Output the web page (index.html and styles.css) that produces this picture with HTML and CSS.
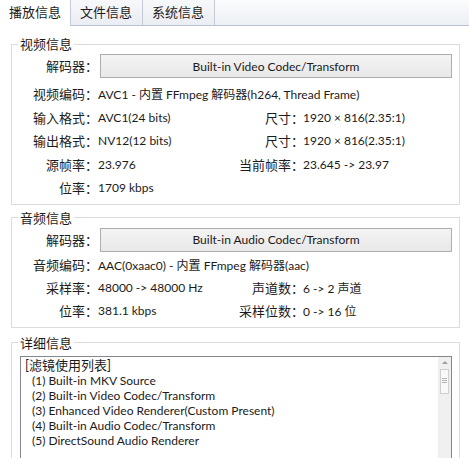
FILE: index.html
```html
<!DOCTYPE html>
<html lang="zh-CN">
<head>
    <meta charset="UTF-8">
    <title>播放信息</title>
    <link rel="stylesheet" href="styles.css">
</head>
<body>
    <div class="tabs">
        <div class="tab active">播放信息</div>
        <div class="tab">文件信息</div>
        <div class="tab">系统信息</div>
    </div>

    <div class="page">
        <fieldset class="group">
            <legend>视频信息</legend>
            <div class="rows">
                <div class="label">解码器：</div>
                <button class="codec span">Built-in Video Codec/Transform</button>

                <div class="label">视频编码：</div>
                <div class="value span">AVC1 - 内置 FFmpeg 解码器(h264, Thread Frame)</div>

                <div class="label">输入格式：</div>
                <div class="value">AVC1(24 bits)</div>
                <div class="label">尺寸：</div>
                <div class="value right">1920 × 816(2.35:1)</div>

                <div class="label">输出格式：</div>
                <div class="value">NV12(12 bits)</div>
                <div class="label">尺寸：</div>
                <div class="value right">1920 × 816(2.35:1)</div>

                <div class="label">源帧率：</div>
                <div class="value">23.976</div>
                <div class="label">当前帧率：</div>
                <div class="value right">23.645 -&gt; 23.97</div>

                <div class="label">位率：</div>
                <div class="value span">1709 kbps</div>
            </div>
        </fieldset>

        <fieldset class="group audio">
            <legend>音频信息</legend>
            <div class="rows">
                <div class="label">解码器：</div>
                <button class="codec span">Built-in Audio Codec/Transform</button>

                <div class="label">音频编码：</div>
                <div class="value span">AAC(0xaac0) - 内置 FFmpeg 解码器(aac)</div>

                <div class="label">采样率：</div>
                <div class="value">48000 -&gt; 48000 Hz</div>
                <div class="label">声道数：</div>
                <div class="value right">6 -&gt; 2 声道</div>

                <div class="label">位率：</div>
                <div class="value">381.1 kbps</div>
                <div class="label">采样位数：</div>
                <div class="value right">0 -&gt; 16 位</div>
            </div>
        </fieldset>

        <fieldset class="group details">
            <legend>详细信息</legend>
            <div class="textbox">
                <div class="lines">
                    <div class="title">[滤镜使用列表]</div>
                    <div class="item">(1) Built-in MKV Source</div>
                    <div class="item">(2) Built-in Video Codec/Transform</div>
                    <div class="item">(3) Enhanced Video Renderer(Custom Present)</div>
                    <div class="item">(4) Built-in Audio Codec/Transform</div>
                    <div class="item">(5) DirectSound Audio Renderer</div>
                </div>
                <div class="scrollbar">
                    <div class="arrow"></div>
                    <div class="thumb"><span></span><span></span><span></span></div>
                </div>
            </div>
        </fieldset>
    </div>
</body>
</html>
```

FILE: styles.css
```css
:root {
    --text: #1b1b1b;
    --group-border: #dcdcdc;
    --tab-border: #c3cad6;
}

html, body {
    height: 100%;
}

body {
    margin: 0;
    overflow: hidden;
    background: #ffffff;
    color: var(--text);
    font-family: Lato, "Noto Sans CJK SC", sans-serif;
    font-size: 12px;
}

/* tab strip */
.tabs {
    display: flex;
    height: 25px;
    border-bottom: 1px solid #b9c3d1;
    background: linear-gradient(#fbfcfd, #eceff4);
    font-size: 13px;
}

.tab {
    width: 71px;
    height: 25px;
    line-height: 25px;
    padding-left: 9px;
    box-sizing: border-box;
    border-right: 1px solid var(--tab-border);
    background: linear-gradient(#f7f8fa, #eaedf2);
}

.tab.active {
    height: 26px;
    margin-bottom: -1px;
    background: #ffffff;
}

.tab + .tab {
    width: 72px;
}

/* group boxes */
.page {
    padding: 0 9px 0 11px;
}

.group {
    margin: 10px 0 0;
    padding: 2px 0 4px;
    border: 1px solid var(--group-border);
    min-width: 0;
}

.group.audio {
    margin-top: 5px;
}

.group.details {
    margin-top: 7px;
    padding-top: 5px;
}

.group legend {
    margin-left: 6px;
    padding: 0 2px;
    line-height: 16px;
    font-size: 13px;
}

.rows {
    display: grid;
    grid-template-columns: 86px 138px 68px 1fr;
    grid-template-rows: 28px;
    grid-auto-rows: 23.5px;
    align-items: center;
}

.audio .rows {
    grid-template-rows: 26px 22px;
}

.label {
    text-align: right;
    white-space: nowrap;
    font-size: 13px;
}

.rows > .label:first-child {
    align-self: start;
    line-height: 24px;
}

.value {
    white-space: nowrap;
}

.value.right {
    margin-left: -1px;
}

.span {
    grid-column: 2 / -1;
}

.codec {
    align-self: start;
    height: 24px;
    margin: 0 7px 0 2px;
    padding: 0;
    border: 1px solid #adadad;
    border-radius: 0;
    background: linear-gradient(#f3f3f3, #e8e8e8);
    color: var(--text);
    font: inherit;
}

/* details text box */
.textbox {
    display: flex;
    height: 110px;
    margin: 0 7px 0 8px;
    border: 1px solid #828790;
}

.lines {
    flex: 1;
    padding: 1px 4px 0;
    line-height: 15px;
    white-space: nowrap;
}

.lines .title {
    font-size: 13px;
}

.lines .item {
    padding-left: 7px;
}

.scrollbar {
    width: 13px;
    background: #f0f0f0;
    display: flex;
    flex-direction: column;
    align-items: center;
}

.arrow {
    height: 12px;
    width: 13px;
    position: relative;
}

.arrow::after {
    content: "";
    position: absolute;
    left: 4px;
    top: 4px;
    border-left: 3px solid transparent;
    border-right: 3px solid transparent;
    border-bottom: 3px solid #a0a0a0;
}

.thumb {
    width: 9px;
    height: 25px;
    border: 1px solid #cfcfcf;
    background: #f8f8f8;
    display: flex;
    flex-direction: column;
    align-items: center;
    gap: 1px;
    padding-top: 8px;
    box-sizing: border-box;
}

.thumb span {
    width: 5px;
    height: 1px;
    background: #b5b5b5;
}
```
